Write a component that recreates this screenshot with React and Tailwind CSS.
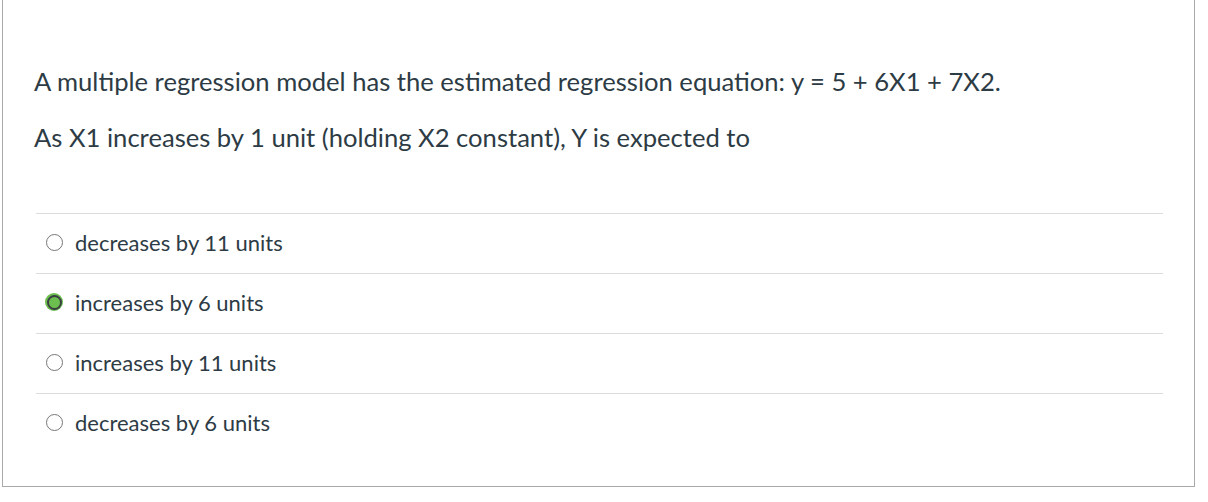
const answers = [
  { text: "decreases by 11 units", selected: false },
  { text: "increases by 6 units", selected: true },
  { text: "increases by 11 units", selected: false },
  { text: "decreases by 6 units", selected: false },
];

function Radio({ selected }) {
  if (selected) {
    return (
      <span className="flex h-[18px] w-[18px] shrink-0 items-center justify-center rounded-full bg-[#6cbf4f]">
        <span className="h-[15px] w-[15px] rounded-full border-[2.5px] border-[#3a3f42] bg-[#6cbf4f]" />
      </span>
    );
  }
  return (
    <span className="flex h-[18px] w-[18px] shrink-0 items-center justify-center">
      <span className="h-[17px] w-[17px] rounded-full border border-[#777777] bg-white" />
    </span>
  );
}

export default function App() {
  return (
    <div className="h-[502px] w-[1208px] bg-white font-['Lato',sans-serif] text-[#2d3b45]">
      <div className="ml-[2px] w-[1193px] border-x border-b border-[#a9a9a9] pt-[63px] pb-[33px]">
        <div className="px-[31px]">
          <p className="text-[25.6px] leading-[36px]">
            A multiple regression model has the estimated regression equation: y = 5 + 6X1 + 7X2.
          </p>
          <p className="mt-[20px] text-[25.6px] leading-[36px]">
            As X1 increases by 1 unit (holding X2 constant), Y is expected to
          </p>
        </div>

        <div className="mt-[58px] ml-[33px] w-[1127px]">
          {answers.map((a, i) => (
            <div
              key={i}
              className="flex h-[60px] items-center gap-[12px] border-t border-[#dcdcdc] pb-[3px] pl-[9px]"
            >
              <Radio selected={a.selected} />
              <span className="text-[22px]">{a.text}</span>
            </div>
          ))}
        </div>
      </div>
    </div>
  );
}
